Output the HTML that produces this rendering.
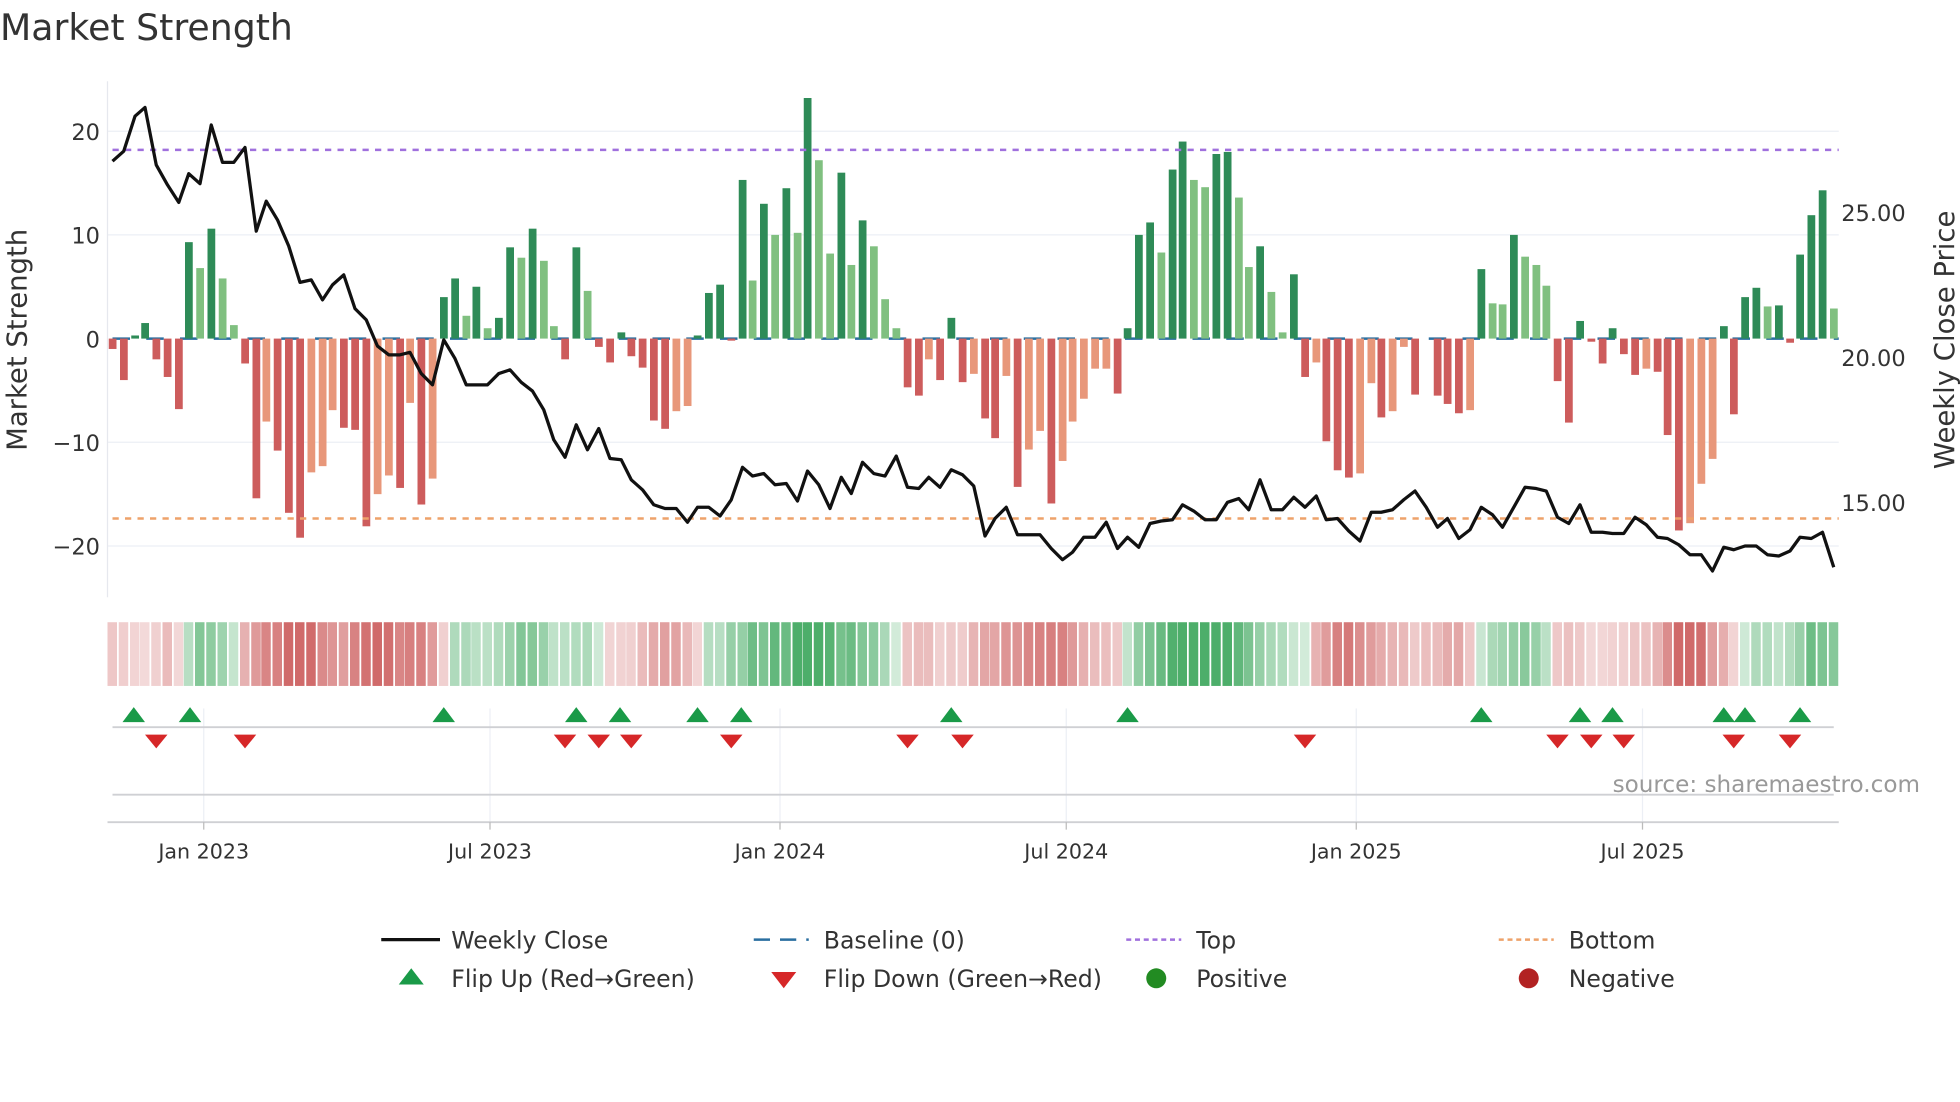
<!DOCTYPE html>
<html><head><meta charset="utf-8"><style>
html,body{margin:0;padding:0;background:#fff;}
svg{display:block;font-family:"DejaVu Sans","Liberation Sans",sans-serif;}
</style></head><body>
<svg id="s" width="1960" height="1102" viewBox="0 0 1568 882" preserveAspectRatio="none" xmlns="http://www.w3.org/2000/svg">
<rect width="1568" height="882" fill="#fff"/>
<text x="0" y="32" font-size="29" fill="#333">Market Strength</text>
<g stroke="#eceff5" stroke-width="1">
<line x1="86" x2="1471" y1="105" y2="105"/><line x1="86" x2="1471" y1="188" y2="188"/>
<line x1="86" x2="1471" y1="354" y2="354"/><line x1="86" x2="1471" y1="437" y2="437"/>
</g>
<line x1="86" x2="86" y1="65" y2="478" stroke="#e6e8ee"/>
<g font-size="18" fill="#333" text-anchor="end">
<text x="80" y="112">20</text><text x="80" y="195">10</text><text x="80" y="278">0</text>
<text x="80" y="361">−10</text><text x="80" y="444">−20</text>
</g>
<g font-size="18" fill="#333">
<text x="1473" y="177">25.00</text><text x="1473" y="293">20.00</text><text x="1473" y="409">15.00</text>
</g>
<text transform="translate(21,272) rotate(-90)" font-size="22" fill="#333" text-anchor="middle">Market Strength</text>
<text transform="translate(1563,272) rotate(-90)" font-size="22" fill="#333" text-anchor="middle">Weekly Close Price</text>
<line x1="90" x2="1471" y1="271" y2="271" stroke="#2a6fa0" stroke-width="2" stroke-dasharray="14 13"/>
<g id="bars"></g>
<line x1="90" x2="1471" y1="120" y2="120" stroke="#a070dd" stroke-width="2" stroke-dasharray="5 5"/>
<line x1="90" x2="1471" y1="415" y2="415" stroke="#eea26a" stroke-width="2" stroke-dasharray="5 5"/>
<polyline id="price" fill="none" stroke="#111" stroke-width="2.6" stroke-linejoin="round"/>
<g id="strip"></g>
<g stroke="#eceff5"><line x1="163" x2="163" y1="567" y2="658"/><line x1="392" x2="392" y1="567" y2="658"/><line x1="624" x2="624" y1="567" y2="658"/><line x1="853" x2="853" y1="567" y2="658"/><line x1="1085" x2="1085" y1="567" y2="658"/><line x1="1314" x2="1314" y1="567" y2="658"/></g>
<line x1="90" x2="1467" y1="582" y2="582" stroke="#cfd0d4" stroke-width="1.5"/>
<line x1="90" x2="1467" y1="636" y2="636" stroke="#cfd0d4" stroke-width="1.5"/>
<line x1="86" x2="1471" y1="658" y2="658" stroke="#cfd0d4" stroke-width="1.5"/>
<g stroke="#bbb"><line x1="163" x2="163" y1="658" y2="664"/><line x1="392" x2="392" y1="658" y2="664"/><line x1="624" x2="624" y1="658" y2="664"/><line x1="853" x2="853" y1="658" y2="664"/><line x1="1085" x2="1085" y1="658" y2="664"/><line x1="1314" x2="1314" y1="658" y2="664"/></g>
<g id="marks"></g>
<text x="1536" y="634" font-size="18.5" fill="#999" text-anchor="end">source: sharemaestro.com</text>
<g font-size="16.5" fill="#333" text-anchor="middle">
<text x="163" y="687">Jan 2023</text><text x="392" y="687">Jul 2023</text><text x="624" y="687">Jan 2024</text>
<text x="853" y="687">Jul 2024</text><text x="1085" y="687">Jan 2025</text><text x="1314" y="687">Jul 2025</text>
</g>
<g font-size="18.9" fill="#333">
<line x1="305" x2="352" y1="752" y2="752" stroke="#111" stroke-width="2.6"/><text x="361" y="759">Weekly Close</text>
<line x1="603" x2="647" y1="752" y2="752" stroke="#2a6fa0" stroke-width="2" stroke-dasharray="13 8"/><text x="659" y="759">Baseline (0)</text>
<line x1="901" x2="945" y1="752" y2="752" stroke="#a070dd" stroke-width="2" stroke-dasharray="4 3"/><text x="957" y="759">Top</text>
<line x1="1199" x2="1243" y1="752" y2="752" stroke="#eea26a" stroke-width="2" stroke-dasharray="4 3"/><text x="1255" y="759">Bottom</text>
<polygon points="319,788 339,788 329,775" fill="#1a9a48"/><text x="361" y="790">Flip Up (Red→Green)</text>
<polygon points="617,778 637,778 627,791" fill="#d62728"/><text x="659" y="790">Flip Down (Green→Red)</text>
<circle cx="925" cy="783" r="8" fill="#228b22"/><text x="957" y="790">Positive</text>
<circle cx="1223" cy="783" r="8" fill="#b22222"/><text x="1255" y="790">Negative</text>
</g>
</svg>
<script>
var NS="http://www.w3.org/2000/svg";
function el(p,t,a){var e=document.createElementNS(NS,t);for(var k in a)e.setAttribute(k,a[k]);p.appendChild(e);return e;}
var B=[[90,-1,1],[99,-4,1],[108,.3,1],[116,1.5,1],[125,-2,1],[134,-3.7,1],[143,-6.8,1],[151,9.3,1],[160,6.8,0],[169,10.6,1],[178,5.8,0],[187,1.3,0],[196,-2.4,1],[205,-15.4,1],[213,-8,0],[222,-10.8,1],[231,-16.8,1],[240,-19.2,1],[249,-12.9,0],[258,-12.3,0],[266,-6.9,0],[275,-8.6,1],[284,-8.8,1],[293,-18.1,1],[302,-15,0],[311,-13.2,0],[320,-14.4,1],[328,-6.2,0],[337,-16,1],[346,-13.5,0],[355,4,1],[364,5.8,1],[373,2.2,0],[381,5,1],[390,1,0],[399,2,1],[408,8.8,1],[417,7.8,0],[426,10.6,1],[435,7.5,0],[443,1.2,0],[452,-2,1],[461,8.8,1],[470,4.6,0],[479,-.8,1],[488,-2.3,1],[497,.6,1],[505,-1.7,1],[514,-2.8,1],[523,-7.9,1],[532,-8.7,1],[541,-7,0],[550,-6.5,0],[558,.3,1],[567,4.4,1],[576,5.2,1],[585,-.2,1],[594,15.3,1],[602,5.6,0],[611,13,1],[620,10,0],[629,14.5,1],[638,10.2,0],[646,23.2,1],[655,17.2,0],[664,8.2,0],[673,16,1],[681,7.1,0],[690,11.4,1],[699,8.9,0],[708,3.8,0],[717,1,0],[726,-4.7,1],[735,-5.5,1],[743,-2,0],[752,-4,1],[761,2,1],[770,-4.2,1],[779,-3.4,0],[788,-7.7,1],[796,-9.6,1],[805,-3.6,0],[814,-14.3,1],[823,-10.7,0],[832,-8.9,0],[841,-15.9,1],[850,-11.8,0],[858,-8,0],[867,-5.8,0],[876,-2.9,0],[885,-2.9,0],[894,-5.3,1],[902,1,1],[911,10,1],[920,11.2,1],[929,8.3,0],[938,16.3,1],[946,19,1],[955,15.3,0],[964,14.6,0],[973,17.8,1],[982,18,1],[991,13.6,0],[999,6.9,0],[1008,8.9,1],[1017,4.5,0],[1026,.6,0],[1035,6.2,1],[1044,-3.7,1],[1053,-2.3,0],[1061,-9.9,1],[1070,-12.7,1],[1079,-13.4,1],[1088,-13,0],[1097,-4.3,0],[1105,-7.6,1],[1114,-7,0],[1123,-.8,0],[1132,-5.4,1],[1141,0,1],[1150,-5.5,1],[1158,-6.3,1],[1167,-7.2,1],[1176,-6.9,0],[1185,6.7,1],[1194,3.4,0],[1202,3.3,0],[1211,10,1],[1220,7.9,0],[1229,7.1,0],[1237,5.1,0],[1246,-4.1,1],[1255,-8.1,1],[1264,1.7,1],[1273,-.3,1],[1282,-2.4,1],[1290,1,1],[1299,-1.5,1],[1308,-3.5,1],[1317,-2.9,0],[1326,-3.2,1],[1334,-9.3,1],[1343,-18.5,1],[1352,-17.8,0],[1361,-14,0],[1370,-11.6,0],[1379,1.2,1],[1387,-7.3,1],[1396,4,1],[1405,4.9,1],[1414,3.1,0],[1423,3.2,1],[1432,-.4,1],[1440,8.1,1],[1449,11.9,1],[1458,14.3,1],[1467,2.9,0]];
var bars=document.getElementById('bars'),strip=document.getElementById('strip');
var U=8.3;
B.forEach(function(b,i){
 var v=b[1],h=Math.abs(v)*U,c=v>=0?(b[2]?'#2e8b57':'#80c080'):(b[2]?'#cd5c5c':'#e8977a');
 if(h>0.3) el(bars,'rect',{x:b[0]-3,y:v>=0?271-h:271,width:6.2,height:h,fill:c});
 var s=0,n=0;for(var j=Math.max(0,i-1);j<=Math.min(B.length-1,i+1);j++){s+=B[j][1];n++;}
 s/=n;var t=Math.min(1,Math.abs(s)/15);t=0.25+0.75*t;
 var col=s>=0?'rgba(46,160,80,'+(t*0.85)+')':'rgba(200,80,80,'+(t*0.85)+')';
 el(strip,'rect',{x:b[0]-4,y:498,width:7.6,height:51,fill:col});
});
var P=[[90,129],[99,121],[108,93],[116,86],[125,132],[134,148],[143,162],[151,139],[160,147],[169,100],[178,130],[187,130],[196,118],[205,185],[213,161],[222,176],[231,197],[240,226],[249,224],[258,240],[266,228],[275,220],[284,247],[293,256],[302,277],[311,284],[320,284],[328,282],[337,299],[346,308],[355,272],[364,287],[373,308],[381,308],[390,308],[399,299],[408,296],[417,306],[426,313],[435,328],[443,352],[452,366],[461,340],[470,360],[479,343],[488,367],[497,368],[505,384],[514,392],[523,404],[532,407],[541,407],[550,418],[558,406],[567,406],[576,413],[585,400],[594,374],[602,381],[611,379],[620,388],[629,387],[638,401],[646,377],[655,388],[664,407],[673,382],[681,395],[690,370],[699,379],[708,381],[717,365],[726,390],[735,391],[743,382],[752,390],[761,376],[770,380],[779,389],[788,429],[796,415],[805,406],[814,428],[823,428],[832,428],[841,439],[850,448],[858,442],[867,430],[876,430],[885,418],[894,439],[902,430],[911,438],[920,419],[929,417],[938,416],[946,404],[955,409],[964,416],[973,416],[982,402],[991,399],[999,408],[1008,384],[1017,408],[1026,408],[1035,398],[1044,406],[1053,397],[1061,416],[1070,415],[1079,425],[1088,433],[1097,410],[1105,410],[1114,408],[1123,400],[1132,393],[1141,406],[1150,422],[1158,415],[1167,431],[1176,424],[1185,406],[1194,412],[1202,422],[1211,406],[1220,390],[1229,391],[1237,393],[1246,414],[1255,419],[1264,404],[1273,426],[1282,426],[1290,427],[1299,427],[1308,414],[1317,420],[1326,430],[1334,431],[1343,436],[1352,444],[1361,444],[1370,457],[1379,438],[1387,440],[1396,437],[1405,437],[1414,444],[1423,445],[1432,441],[1440,430],[1449,431],[1458,426],[1467,454]];
document.getElementById('price').setAttribute('points',P.map(function(p){return p.join(',')}).join(' '));
var m=document.getElementById('marks');
[107,152,355,461,496,558,593,761,902,1185,1264,1290,1379,1396,1440].forEach(function(x){el(m,'polygon',{points:(x-9)+',578 '+(x+9)+',578 '+x+',566',fill:'#1a9a48'});});
[125,196,452,479,505,585,726,770,1044,1246,1273,1299,1387,1432].forEach(function(x){el(m,'polygon',{points:(x-9)+',588 '+(x+9)+',588 '+x+',599',fill:'#d62728'});});
</script>
</body></html>
